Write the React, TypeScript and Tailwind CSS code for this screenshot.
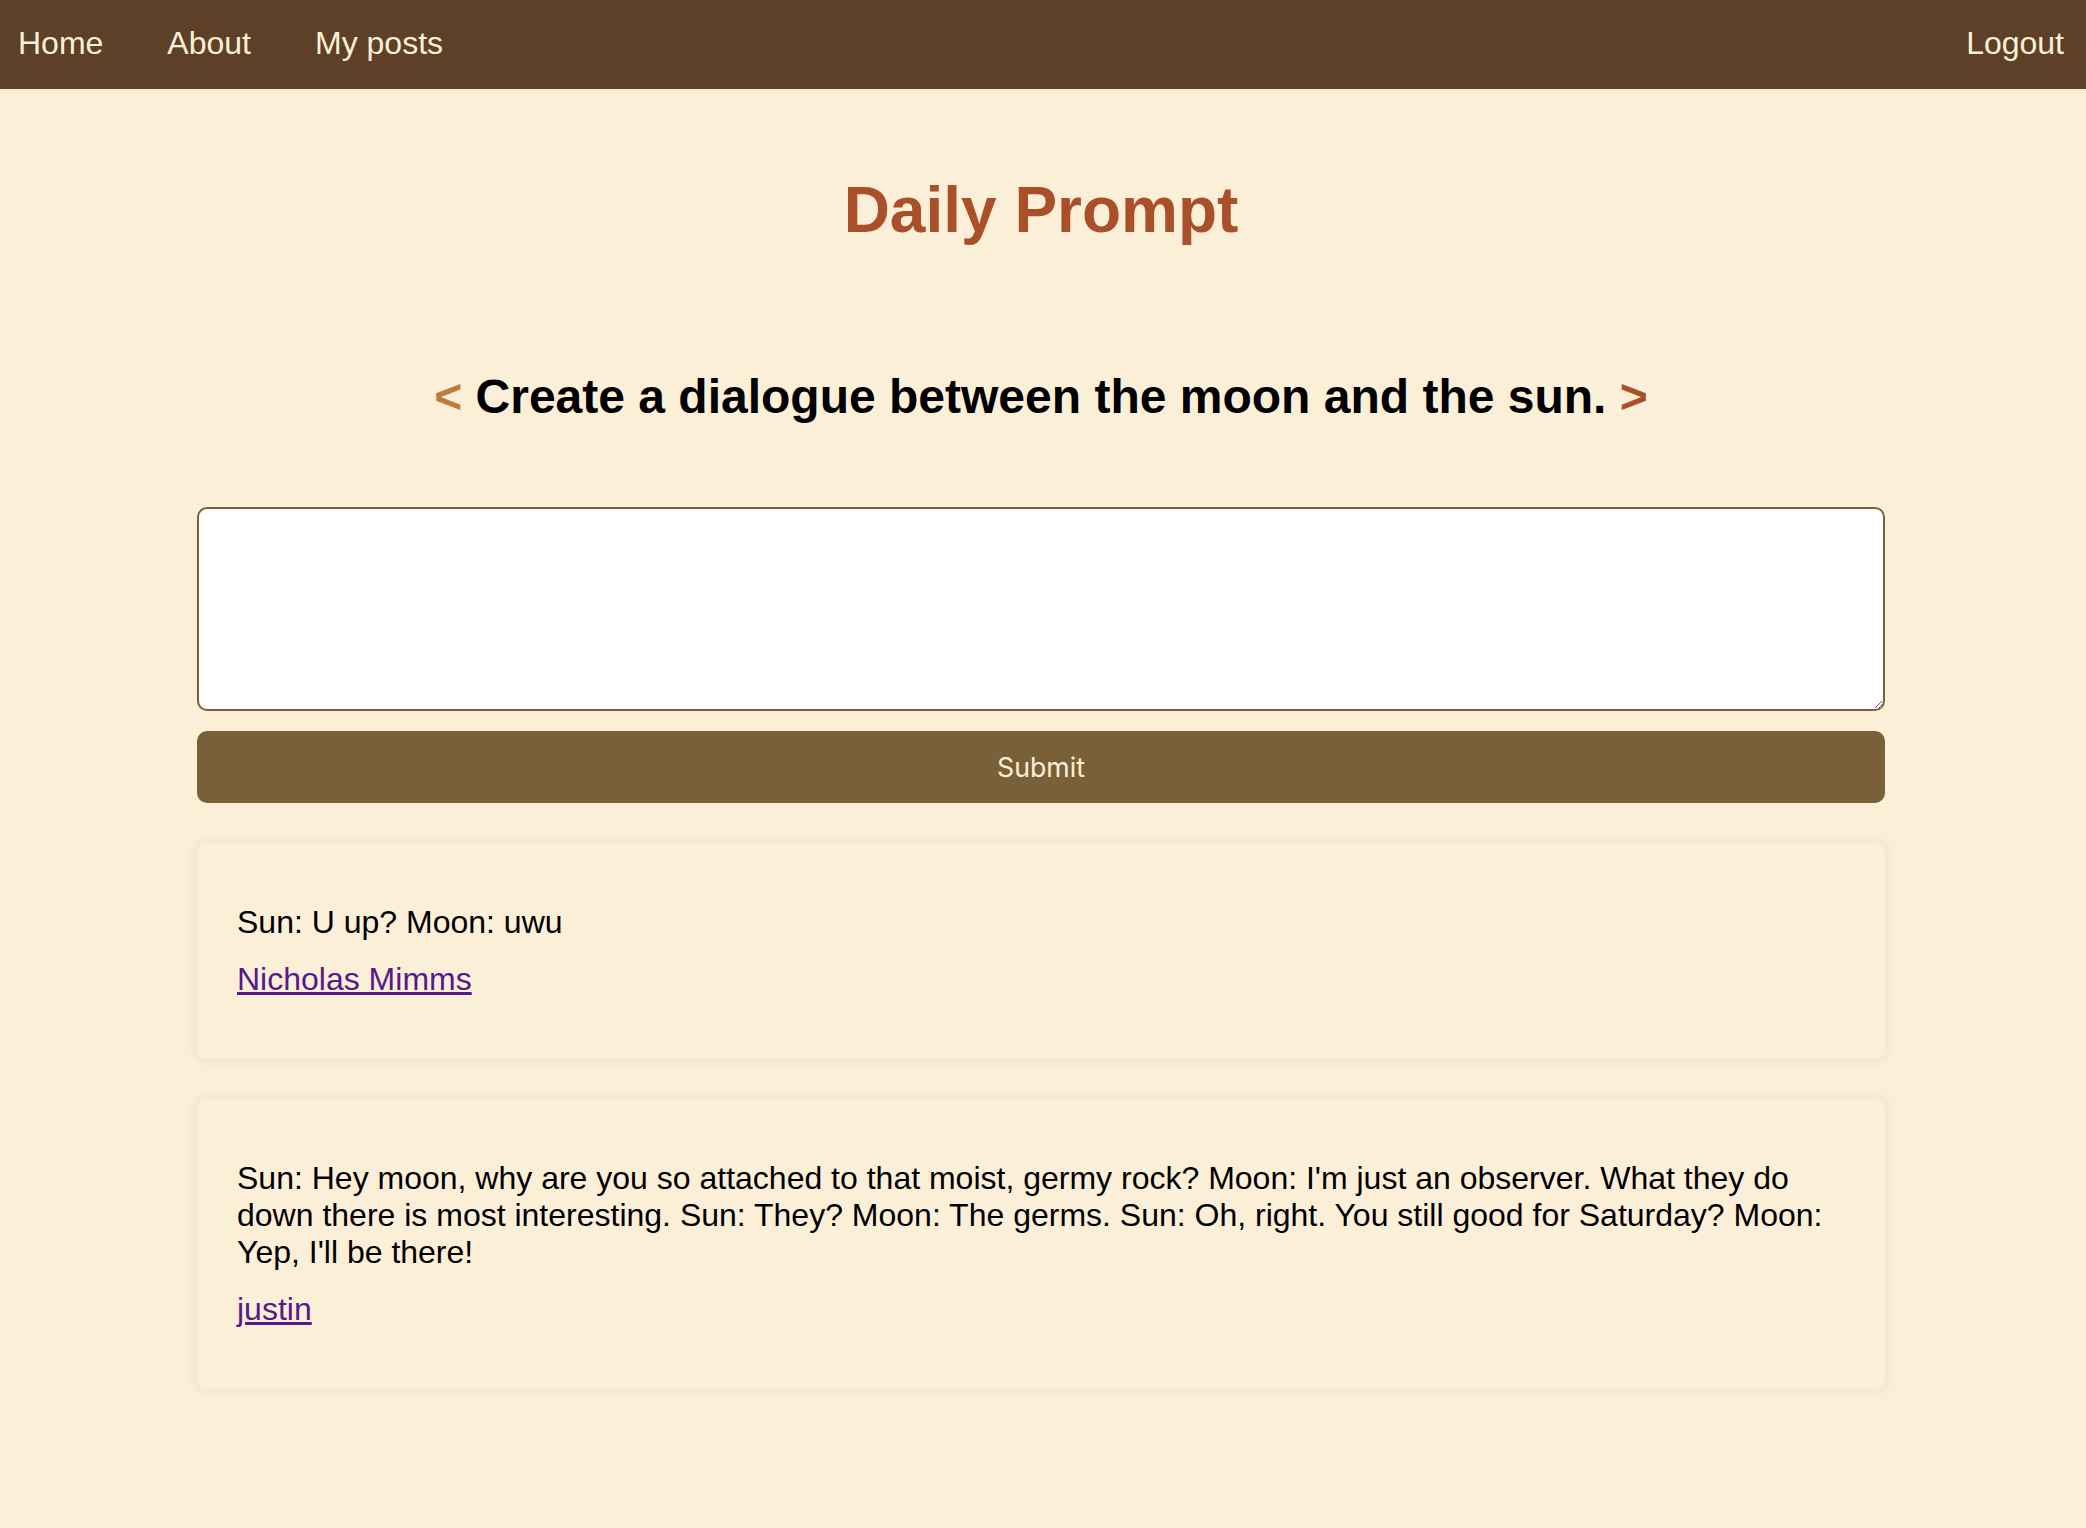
import React from "react";

const posts = [
  { text: "Sun: U up? Moon: uwu", author: "Nicholas Mimms" },
  {
    text:
      "Sun: Hey moon, why are you so attached to that moist, germy rock? Moon: I'm just an observer. What they do down there is most interesting. Sun: They? Moon: The germs. Sun: Oh, right. You still good for Saturday? Moon: Yep, I'll be there!",
    author: "justin",
  },
];

export default function App() {
  return (
    <div className="min-h-[1528px] bg-[#fcefd8] font-['Liberation_Sans',Arial,sans-serif] text-black">
      <nav className="flex h-[89px] items-center justify-between bg-[#5d4027] pb-[3px] pl-[18px] pr-[22px] text-[32px] leading-[37px] text-[#fcefd8]">
        <div className="flex items-center gap-[64px]">
          <a href="#">Home</a>
          <a href="#">About</a>
          <a href="#">My posts</a>
        </div>
        <a href="#">Logout</a>
      </nav>

      <main className="ml-[197px] w-[1688px] pb-[100px]">
        <h1 className="mt-[84px] text-center text-[64px] font-bold leading-[74px] text-[#a9502b]">
          Daily Prompt
        </h1>
        <h2 className="mt-[122px] text-center text-[48px] font-bold leading-[55px]">
          <span className="text-[#bb7c3c]">&lt;</span> Create a dialogue between the moon and the sun.{" "}
          <span className="text-[#a9502b]">&gt;</span>
        </h2>

        <form className="mt-[83px] flex flex-col gap-5">
          <textarea className="block h-[204px] w-full rounded-[10px] border-2 border-[#7a5f3a] bg-white p-3 text-[24px] outline-none" />
          <button
            type="button"
            className="h-[72px] w-full rounded-[10px] bg-[#7a6039] font-['Inter',sans-serif] text-[26.7px] text-[#fcefd8]"
          >
            Submit
          </button>
        </form>

        <div className="mt-10 flex flex-col gap-10">
          {posts.map((p) => (
            <div
              key={p.author}
              className="flex flex-col gap-5 rounded-[10px] bg-[#fcefd8] px-10 py-[61px] text-[32px] leading-[37px] shadow-[0_0_14px_rgba(120,80,20,0.12)]"
            >
              <p>{p.text}</p>
              <p>
                <a href="#" className="text-[#551a8b] underline">
                  {p.author}
                </a>
              </p>
            </div>
          ))}
        </div>
      </main>
    </div>
  );
}
